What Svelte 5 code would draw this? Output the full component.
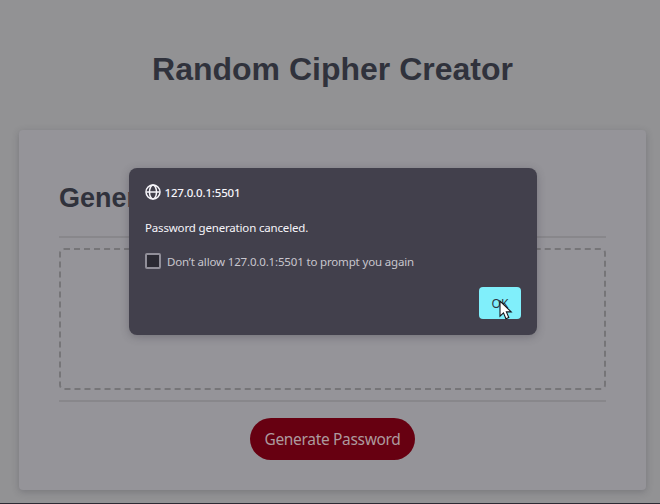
<script>
  let suppress = $state(false);
</script>

<div class="page">
  <h1>Random Cipher Creator</h1>
  <main class="card">
    <h2>Generate a Password</h2>
    <div class="result"><div class="box"></div></div>
    <button class="generate"><span>Generate Password</span></button>
  </main>

  <div class="dialog" role="dialog" aria-label="127.0.0.1:5501">
    <div class="origin">
      <svg width="16" height="16" viewBox="0 0 16 16" fill="none" stroke="#f6f5fa" stroke-width="1.5">
        <circle cx="8" cy="8" r="7" />
        <ellipse cx="8" cy="8" rx="3.5" ry="7" />
        <path d="M1.3 8h13.4" />
      </svg>
      <span>127.0.0.1:5501</span>
    </div>
    <p>Password generation canceled.</p>
    <label>
      <input type="checkbox" bind:checked={suppress} />
      <span>Don’t allow 127.0.0.1:5501 to prompt you again</span>
    </label>
    <div class="actions"><button class="ok">OK</button></div>
  </div>

  <svg class="cursor" width="14" height="21" viewBox="0 0 14 21">
    <path d="M1 1v15.2l3.5-3.3 2.4 5.8 2.9-1.2-2.4-5.6h4.8z" fill="#fff" stroke="#15151c" stroke-width="1.1" />
  </svg>
</div>

<style>
  :global(body) { margin: 0; background: #929294; }
  .page {
    position: relative;
    box-sizing: border-box;
    width: 660px;
    height: 504px;
    padding: 51px 14px 0 19px;
    overflow: hidden;
    background: #929294;
    border-bottom: 1px solid #2b2a33;
    font-family: "Liberation Sans", Arial, sans-serif;
  }
  h1 {
    margin: 0 0 42px;
    font-size: 32px;
    line-height: 37px;
    color: #30323c;
    text-align: center;
    white-space: nowrap;
  }
  .card {
    box-sizing: border-box;
    height: 360px;
    padding: 50px 40px 0;
    display: flex;
    flex-direction: column;
    align-items: center;
    border-radius: 4px;
    background: #959499;
    box-shadow: 0 2px 7px rgba(45, 45, 55, 0.25);
  }
  h2 {
    align-self: stretch;
    margin: 0 0 20px;
    font-size: 27px;
    line-height: 36px;
    color: #30323c;
  }
  .result {
    box-sizing: border-box;
    align-self: stretch;
    height: 166px;
    padding: 10px 0;
    border-top: 2px solid #88878b;
    border-bottom: 2px solid #88878b;
  }
  .box {
    box-sizing: border-box;
    height: 142px;
    border: 2px dashed #767578;
    border-radius: 5px;
  }
  button { border: 0; margin: 0; padding: 0; }
  .generate {
    width: 165px;
    height: 42px;
    margin-top: 16px;
    border-radius: 21px;
    background: #670011;
    color: #ad9a9e;
    font: 15.5px/42px "Noto Sans", sans-serif;
    white-space: nowrap;
    letter-spacing: -0.33px;
  }
  .dialog {
    position: absolute;
    left: 129px;
    top: 168px;
    box-sizing: border-box;
    width: 408px;
    height: 167px;
    padding: 16px;
    border-radius: 8px;
    background: #42404c;
    box-shadow: 0 2px 9px rgba(45, 43, 55, 0.3);
    color: #f6f5fa;
    font: 11.5px/16px "Noto Sans", sans-serif;
    white-space: nowrap;
  }
  .origin { display: flex; align-items: center; gap: 3.5px; height: 16px; }
  .origin svg { flex: none; }
  .origin span { padding-top: 1px; font-weight: 500; letter-spacing: -0.17px; }
  p { margin: 20px 0 17px; line-height: 16px; letter-spacing: -0.17px; }
  label { display: flex; align-items: center; gap: 6px; height: 16px; color: #c8c6ce; letter-spacing: -0.16px; }
  label span { padding-top: 1px; }
  input {
    appearance: none;
    box-sizing: border-box;
    width: 16px;
    height: 16px;
    margin: 0;
    border: 2px solid #918f99;
    border-radius: 2px;
    background: #2b2a33;
  }
  .actions { display: flex; justify-content: flex-end; margin-top: 18px; }
  .ok {
    width: 42px;
    height: 32px;
    padding-top: 1px;
    border-radius: 4px;
    background: #80effb;
    color: #2b3440;
    font: 12px/31px "Noto Sans", sans-serif;
  }
  .cursor { position: absolute; left: 499px; top: 300px; }
</style>
